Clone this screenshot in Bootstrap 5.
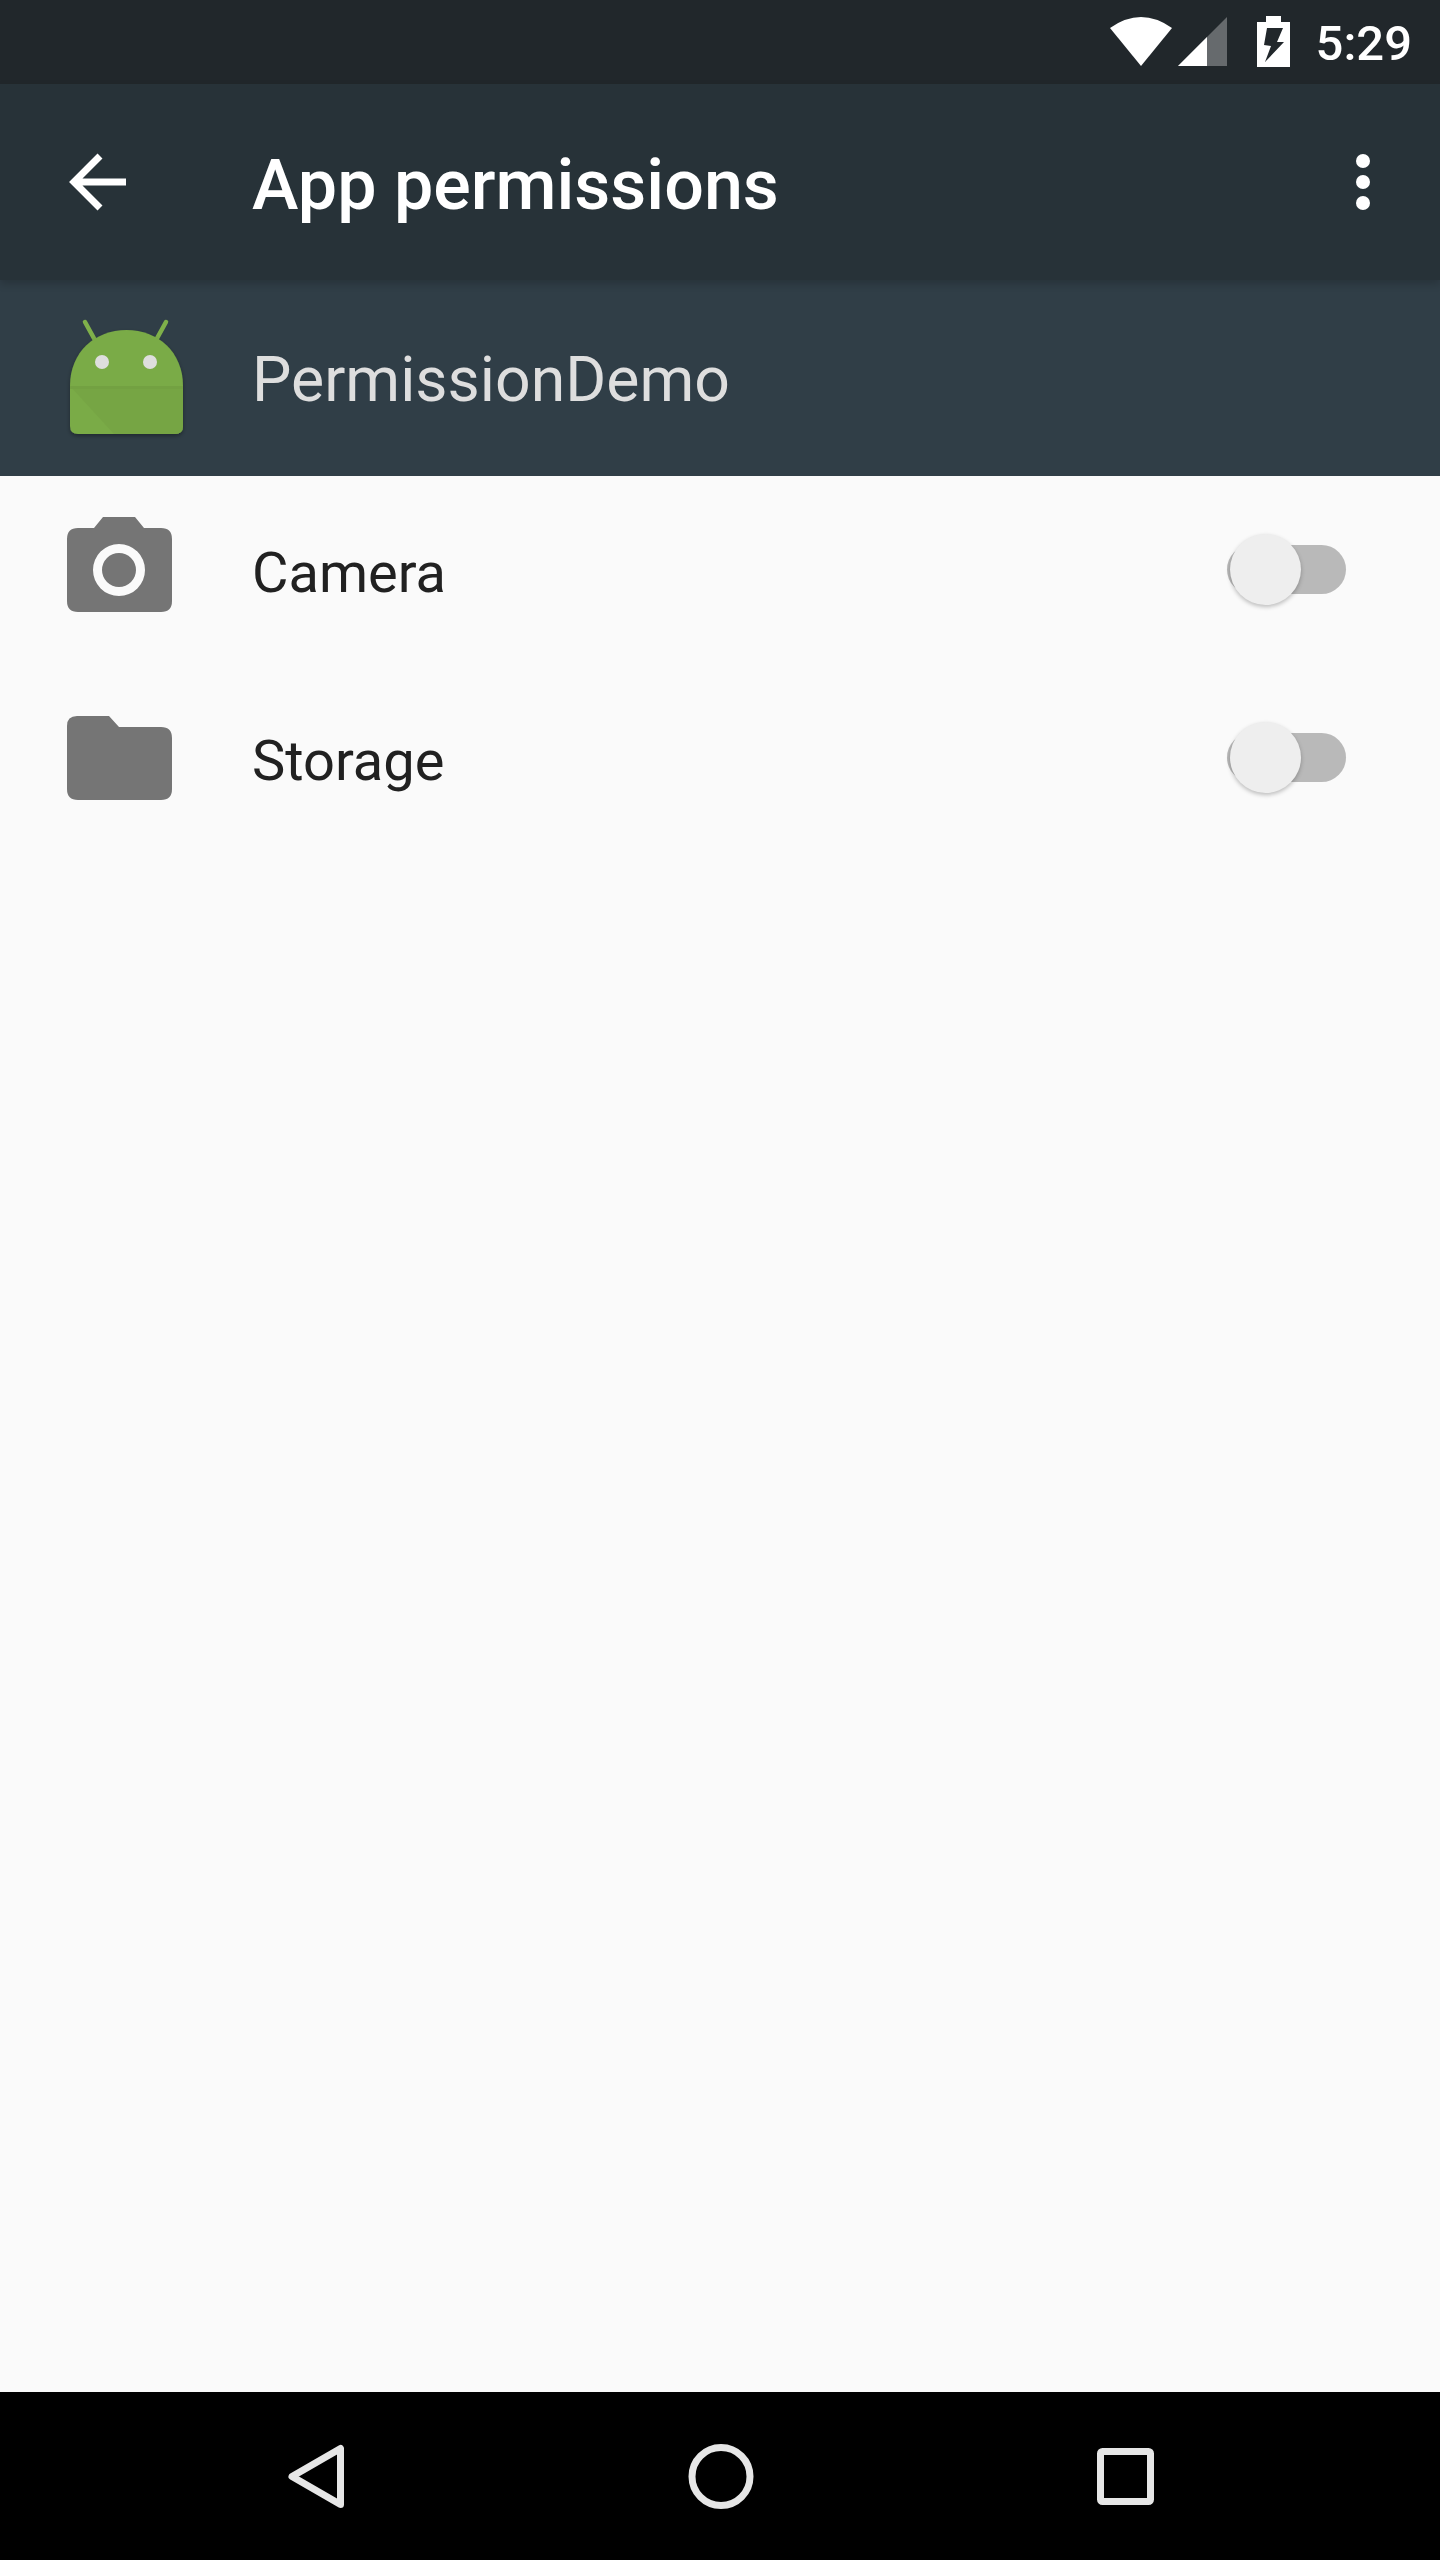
<!DOCTYPE html>
<html lang="en">
<head>
  <meta charset="UTF-8">
  <meta name="viewport" content="width=device-width, initial-scale=1.0">
  <title>App permissions</title>
  <link href="https://cdn.jsdelivr.net/npm/bootstrap@5.3.3/dist/css/bootstrap.min.css" rel="stylesheet" crossorigin="anonymous">
  <style>
    body {
      min-height: 2560px;
      background: #fafafa;
      font-family: Roboto, "Liberation Sans", sans-serif;
    }
    .status-area {
      height: 84px;
      background: #21272b;
      color: #fff;
      font-size: 49px;
      font-weight: 500;
      line-height: 1;
      padding-right: 28px;
    }
    .status-area svg { display: block; }
    .status-time { padding-top: 2px; margin-left: -1px; }
    .app-toolbar {
      height: 196px;
      padding: 0;
      background: #273238;
      box-shadow: 0 4px 8px rgba(0, 0, 0, .18);
      z-index: 2;
    }
    .toolbar-title {
      font-size: 70px;
      font-weight: 500;
      line-height: 1;
      color: #fff;
      margin: 6px 0 0 -1px;
    }
    .lead-slot { width: 253px; flex: none; }
    .app-header {
      height: 196px;
      background: #303e47;
    }
    .app-name {
      font-size: 62.5px;
      line-height: 1;
      color: #dedede;
      margin: 5px 0 0 -1px;
    }
    .perm-list { border-radius: 0; }
    .perm-row {
      height: 188px;
      padding: 0;
      border: 0;
      background: #fafafa;
      color: #212121;
      font-size: 56px;
      line-height: 1;
    }
    .perm-label {
      flex: 1 1 auto;
      margin: 6px 0 0 -1px;
    }
    .perm-toggle {
      position: relative;
      width: 119px;
      height: 49px;
      margin: 0 94px 2px 0;
      border-radius: 25px;
      background: #b9b9b9;
    }
    .perm-thumb {
      position: absolute;
      left: 3px;
      top: -11px;
      width: 71px;
      height: 71px;
      border-radius: 50%;
      background: #eeeeee;
      box-shadow: 0 2px 4px rgba(0, 0, 0, .25);
    }
    .system-nav {
      height: 168px;
      background: #000;
    }
  </style>
</head>
<body class="d-flex flex-column">
  <!-- Status bar -->
  <div class="status-area d-flex align-items-center justify-content-end">
    <svg width="317" height="84" viewBox="1000 0 317 84" aria-hidden="true">
      <path d="M1110 28Q1141 6 1172 28L1141 66Z" fill="#fff"/>
      <path d="M1178 66L1227 17V66Z" fill="#666a6d"/>
      <path d="M1178 66L1207 37V66Z" fill="#fff"/>
      <path fill-rule="evenodd" fill="#fff" d="M1266 16H1281V22H1290V67H1257V22H1266ZM1267 28L1264 45L1271 46L1265 62L1284 42H1277L1283 28Z"/>
    </svg>
    <span class="status-time">5:29</span>
  </div>

  <!-- Toolbar -->
  <nav class="navbar app-toolbar position-relative flex-nowrap">
    <div class="lead-slot d-flex">
      <svg width="253" height="196" viewBox="0 84 253 196" aria-hidden="true">
        <path d="M126 182H76M100 156L74 182L100 208" fill="none" stroke="#fff" stroke-width="7"/>
      </svg>
    </div>
    <h1 class="toolbar-title flex-grow-1">App permissions</h1>
    <svg width="140" height="196" viewBox="1300 84 140 196" aria-hidden="true">
      <circle cx="1363" cy="161" r="7" fill="#fff"/>
      <circle cx="1363" cy="182" r="7" fill="#fff"/>
      <circle cx="1363" cy="203" r="7" fill="#fff"/>
    </svg>
  </nav>

  <!-- App header -->
  <div class="app-header d-flex align-items-center">
    <div class="lead-slot d-flex">
      <svg width="253" height="196" viewBox="0 280 253 196" aria-hidden="true">
        <defs>
          <filter id="iconShadow" x="-10%" y="-10%" width="120%" height="125%">
            <feDropShadow dx="0" dy="2" stdDeviation="2" flood-color="#000" flood-opacity=".35"/>
          </filter>
        </defs>
        <path d="M85 322L96 342M166 322L155 342" stroke="#7fb04a" stroke-width="4.5" stroke-linecap="round"/>
        <path d="M70 386C70 352 95 330 126.5 330C158 330 183 352 183 386V426Q183 434 175 434H78Q70 434 70 426Z" fill="#7aab46" filter="url(#iconShadow)"/>
        <path d="M70 386H183V426Q183 434 175 434H114Z" fill="#76a544"/>
        <path d="M70 386H183V389H70Z" fill="#73a142"/>
        <ellipse cx="102" cy="362" rx="7" ry="7" fill="#dedede"/>
        <ellipse cx="150" cy="362" rx="7" ry="7" fill="#dedede"/>
      </svg>
    </div>
    <span class="app-name">PermissionDemo</span>
  </div>

  <!-- Permission rows -->
  <main class="flex-grow-1">
    <ul class="list-group perm-list">
      <li class="list-group-item perm-row d-flex align-items-center">
        <div class="lead-slot d-flex">
          <svg width="253" height="188" viewBox="0 476 253 188" aria-hidden="true">
            <path fill-rule="evenodd" fill="#757575" d="M103 517H135L144 528H161Q172 528 172 539V601Q172 612 161 612H78Q67 612 67 601V539Q67 528 78 528H94ZM119 544A26 26 0 1 0 119 596A26 26 0 1 0 119 544ZM119 553A17 17 0 1 1 119 587A17 17 0 1 1 119 553Z"/>
          </svg>
        </div>
        <span class="perm-label">Camera</span>
        <div class="perm-toggle"><div class="perm-thumb"></div></div>
      </li>
      <li class="list-group-item perm-row d-flex align-items-center">
        <div class="lead-slot d-flex">
          <svg width="253" height="188" viewBox="0 664 253 188" aria-hidden="true">
            <path fill="#757575" d="M77 716H109L119 727H161Q172 727 172 738V789Q172 800 161 800H78Q67 800 67 789V726Q67 716 77 716Z"/>
          </svg>
        </div>
        <span class="perm-label">Storage</span>
        <div class="perm-toggle"><div class="perm-thumb"></div></div>
      </li>
    </ul>
  </main>

  <!-- System navigation -->
  <div class="system-nav">
    <svg class="d-block" width="1440" height="168" viewBox="0 2392 1440 168" aria-hidden="true">
      <path d="M340.5 2448.5V2504.5L292 2476.5Z" fill="none" stroke="#e6e6e6" stroke-width="7" stroke-linejoin="round"/>
      <circle cx="721" cy="2476.5" r="29" fill="none" stroke="#e6e6e6" stroke-width="7"/>
      <rect x="1100.5" y="2451.5" width="50" height="50" rx="2" fill="none" stroke="#e6e6e6" stroke-width="7"/>
    </svg>
  </div>

  <script src="https://cdn.jsdelivr.net/npm/bootstrap@5.3.3/dist/js/bootstrap.bundle.min.js" crossorigin="anonymous"></script>
</body>
</html>
